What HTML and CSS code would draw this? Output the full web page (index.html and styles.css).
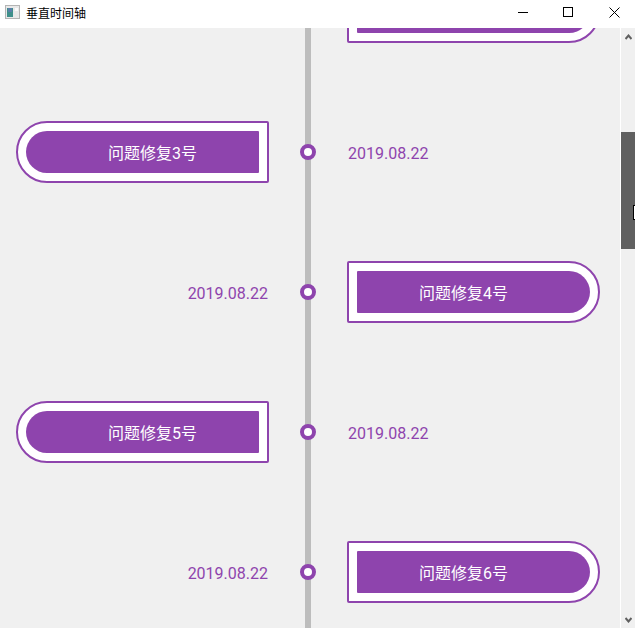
FILE: index.html
```html
<!DOCTYPE html>
<html lang="zh-CN">
<head>
    <meta charset="UTF-8">
    <meta name="viewport" content="width=device-width, initial-scale=1.0">
    <title>垂直时间轴</title>
    <link rel="stylesheet" href="styles.css">
</head>
<body>
    <div class="window">
        <div class="titlebar">
            <svg class="app-icon" width="15" height="14" viewBox="0 0 15 14">
                <rect x="0.5" y="0.5" width="14" height="13" fill="#e8e8e8" stroke="#b4b4b4"/>
                <rect x="2" y="3" width="6" height="9" fill="#3f8f8a"/>
                <rect x="3" y="3" width="4" height="4" fill="#5a7fa8"/>
                <rect x="10" y="3" width="3" height="3" fill="#fafafa"/>
            </svg>
            <span class="title">垂直时间轴</span>
            <div class="controls">
                <button class="control">
                    <svg width="10" height="10" viewBox="0 0 10 10"><path d="M0 5.5H10" stroke="#000" fill="none"/></svg>
                </button>
                <button class="control">
                    <svg width="10" height="10" viewBox="0 0 10 10"><rect x="0.5" y="0.5" width="9" height="9" stroke="#000" fill="none"/></svg>
                </button>
                <button class="control">
                    <svg width="11" height="11" viewBox="0 0 11 11"><path d="M0.5 0.5L10.5 10.5M10.5 0.5L0.5 10.5" stroke="#000" fill="none"/></svg>
                </button>
            </div>
        </div>

        <div class="content">
            <div class="timeline">
                <div class="row">
                    <div class="date date-left"></div>
                    <div class="axis"><span class="dot"></span></div>
                    <div class="card card-right"><div class="pill"></div></div>
                </div>
                <div class="row">
                    <div class="card card-left"><div class="pill">问题修复3号</div></div>
                    <div class="axis"><span class="dot"></span></div>
                    <div class="date">2019.08.22</div>
                </div>
                <div class="row">
                    <div class="date date-left">2019.08.22</div>
                    <div class="axis"><span class="dot"></span></div>
                    <div class="card card-right"><div class="pill">问题修复4号</div></div>
                </div>
                <div class="row">
                    <div class="card card-left"><div class="pill">问题修复5号</div></div>
                    <div class="axis"><span class="dot"></span></div>
                    <div class="date">2019.08.22</div>
                </div>
                <div class="row">
                    <div class="date date-left">2019.08.22</div>
                    <div class="axis"><span class="dot"></span></div>
                    <div class="card card-right"><div class="pill">问题修复6号</div></div>
                </div>
            </div>

            <div class="scrollbar">
                <svg class="arrow" width="7" height="6" viewBox="0 0 7 6"><path d="M0.5 5L3.5 1.5L6.5 5" stroke="#606060" stroke-width="2" fill="none"/></svg>
                <div class="thumb"></div>
                <svg class="arrow arrow-down" width="7" height="6" viewBox="0 0 7 6"><path d="M0.5 1L3.5 4.5L6.5 1" stroke="#606060" stroke-width="2" fill="none"/></svg>
            </div>
            <div class="cursor"></div>
        </div>
    </div>
</body>
</html>
```

FILE: styles.css
```css
body {
    margin: 0;
    font-family: Roboto, "Noto Sans CJK SC", sans-serif;
    background-color: #f0f0f0;
}

.window {
    width: 635px;
    height: 628px;
    display: flex;
    flex-direction: column;
    overflow: hidden;
}

.titlebar {
    height: 28px;
    flex-shrink: 0;
    display: flex;
    align-items: center;
    padding-left: 5px;
    background-color: white;
    position: relative;
    z-index: 1;
}

.app-icon {
    margin-right: 6px;
    margin-top: -4px;
}

.title {
    font-family: "Noto Sans CJK SC", sans-serif;
    font-size: 12px;
    color: black;
    margin-top: -3px;
}

.controls {
    margin-left: auto;
    margin-right: -2px;
    display: flex;
    margin-top: -4px;
}

.control {
    width: 46px;
    height: 24px;
    padding: 0;
    border: 0;
    background: none;
    display: flex;
    align-items: center;
    justify-content: center;
}

.control:first-child {
    width: 44px;
}

.content {
    flex: 1;
    display: flex;
    min-height: 0;
    position: relative;
}

.timeline {
    width: 620px;
    height: 600px;
    overflow: hidden;
}

.row {
    display: grid;
    grid-template-columns: 253px 16px 253px;
    column-gap: 31px;
    align-items: center;
    height: 140px;
    padding-left: 16px;
}

.row:first-child {
    margin-top: -86px;
}

.axis {
    align-self: stretch;
    display: flex;
    align-items: center;
    background: linear-gradient(#bdbdbd, #bdbdbd) center / 6px 100% no-repeat;
}

.dot {
    width: 8px;
    height: 8px;
    border: 4px solid #8e44ad;
    border-radius: 50%;
    background-color: white;
}

.date {
    font-size: 16px;
    line-height: 22px;
    color: #8e44ad;
    padding-left: 1px;
    padding-top: 4px;
}

.date-left {
    text-align: right;
    padding-left: 0;
    padding-right: 1px;
}

.card {
    box-sizing: border-box;
    height: 62px;
    padding: 8px;
    background-color: white;
    border: 2px solid #8e44ad;
}

.card-left {
    border-radius: 31px 2px 2px 31px;
}

.card-right {
    border-radius: 2px 31px 31px 2px;
}

.pill {
    height: 42px;
    line-height: 42px;
    padding-top: 2px;
    box-sizing: border-box;
    background-color: #8e44ad;
    color: white;
    font-size: 16px;
    text-align: center;
}

.card-left .pill {
    border-radius: 21px 1px 1px 21px;
    padding-left: 20px;
}

.card-right .pill {
    border-radius: 1px 21px 21px 1px;
    padding-right: 20px;
}

.scrollbar {
    width: 14px;
    border-left: 1px solid white;
    position: relative;
    background-color: #f0f0f0;
}

.arrow {
    position: absolute;
    left: 4px;
    top: 6px;
}

.arrow-down {
    top: auto;
    bottom: 5px;
}

.thumb {
    margin-top: 104px;
    height: 117px;
    background-color: #606060;
}

.cursor {
    position: absolute;
    left: 633px;
    top: 177px;
    width: 2px;
    height: 13px;
    background-color: white;
    border: 1px solid black;
    border-right: 0;
}
```
